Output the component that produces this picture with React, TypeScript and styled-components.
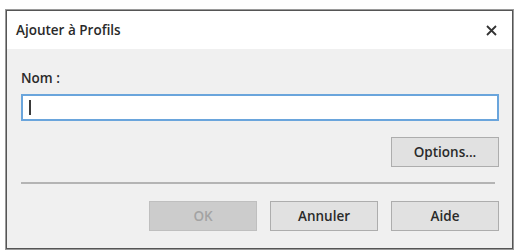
import styled, { createGlobalStyle } from "styled-components";

const GlobalStyle = createGlobalStyle`
    html, body {
        margin: 0;
        padding: 0;
        background: #ffffff;
    }
    body {
        font-family: "Open Sans", "Noto Sans", Arial, sans-serif;
    }
`

const Page = styled.div`
    width: 518px;
    height: 251px;
    padding: 10px 0 0 6px;
    box-sizing: border-box;
`

const Dialog = styled.div`
    width: 507px;
    height: 239px;
    box-sizing: border-box;
    border: 1px solid #555555;
    box-shadow: 0 0 0 1px #9a9a9a;
    display: flex;
    flex-direction: column;
    background: #f0f0f0;
`

const TitleBar = styled.div`
    height: 38px;
    background: #ffffff;
    display: flex;
    align-items: center;
    justify-content: space-between;
    padding: 0 14px 0 9px;
    flex-shrink: 0;
`

const Title = styled.span`
    font-size: 13.5px;
    font-weight: 600;
    color: #2a2a2a;
`

const CloseButton = styled.button`
    border: none;
    background: transparent;
    padding: 0;
    width: 14px;
    height: 14px;
    display: flex;
    align-items: center;
    justify-content: center;
    cursor: pointer;
`

const Body = styled.div`
    flex: 1;
    display: flex;
    flex-direction: column;
    padding: 20px 13px 0 14px;
`

const Label = styled.label`
    font-size: 13.5px;
    font-weight: 600;
    color: #2a2a2a;
    line-height: 18px;
    margin-bottom: 7px;
`

const NameInput = styled.div`
    height: 27px;
    box-sizing: border-box;
    border: 2px solid #6aa5dc;
    background: #ffffff;
    display: flex;
    align-items: center;
    padding-left: 6px;
`

const Caret = styled.span`
    width: 2px;
    height: 15px;
    background: #3a3a3a;
`

const Row = styled.div<{ $gap?: number; $top?: number }>`
    display: flex;
    justify-content: flex-end;
    gap: ${(p) => p.$gap ?? 0}px;
    margin-top: ${(p) => p.$top ?? 0}px;
`

const Button = styled.button<{ $disabled?: boolean }>`
    width: 108px;
    height: 30px;
    box-sizing: border-box;
    font-family: inherit;
    font-size: 13.5px;
    font-weight: 600;
    border: 1px solid ${(p) => (p.$disabled ? "#bfbfbf" : "#adadad")};
    background: ${(p) => (p.$disabled ? "#cccccc" : "#e1e1e1")};
    color: ${(p) => (p.$disabled ? "#a3a3a3" : "#2a2a2a")};
    padding: 0;
`

const Separator = styled.hr`
    border: none;
    height: 2px;
    background: #b4b4b4;
    margin: 15px 4px 17px 0;
`

export default function App() {
    return (
        <Page>
            <GlobalStyle />
            <Dialog>
                <TitleBar>
                    <Title>Ajouter à Profils</Title>
                    <CloseButton aria-label="Fermer">
                        <svg width="11" height="11" viewBox="0 0 11 11">
                            <path d="M1 1 L10 10 M10 1 L1 10" stroke="#333" strokeWidth="1.8" />
                        </svg>
                    </CloseButton>
                </TitleBar>
                <Body>
                    <Label>Nom :</Label>
                    <NameInput>
                        <Caret />
                    </NameInput>
                    <Row $top={16}>
                        <Button>Options...</Button>
                    </Row>
                    <Separator />
                    <Row $gap={13}>
                        <Button $disabled>OK</Button>
                        <Button>Annuler</Button>
                        <Button>Aide</Button>
                    </Row>
                </Body>
            </Dialog>
        </Page>
    )
}
